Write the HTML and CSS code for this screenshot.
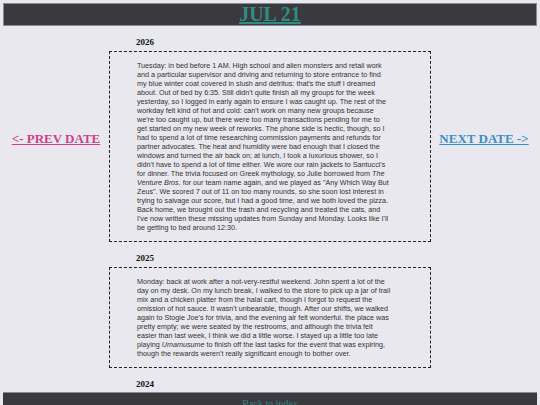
FILE: index.html
```html
<!DOCTYPE html>
<html>
<head>
    <title>Jul 21</title>
    <link rel="stylesheet" href="styles.css">
</head>
<body>
    <div class="topbar">
        <a class="day-title" href="#">JUL 21</a>
    </div>

    <div class="layout">
        <div class="side">
            <a class="prev-link" href="#">&lt;- PREV DATE</a>
        </div>

        <div class="entries">
            <div class="entry">
                <h3 class="year">2026</h3>
                <div class="entry-box">
                    <p>Tuesday: in bed before 1 AM. High school and alien monsters and retail work and a particular supervisor and driving and returning to store entrance to find my blue winter coat covered in slush and detritus: that's the stuff I dreamed about. Out of bed by 6:35. Still didn't quite finish all my groups for the week yesterday, so I logged in early again to ensure I was caught up. The rest of the workday felt kind of hot and cold: can't work on many new groups because we're too caught up, but there were too many transactions pending for me to get started on my new week of reworks. The phone side is hectic, though, so I had to spend a lot of time researching commission payments and refunds for partner advocates. The heat and humidity were bad enough that I closed the windows and turned the air back on; at lunch, I took a luxurious shower, so I didn't have to spend a lot of time either. We wore our rain jackets to Santucci's for dinner. The trivia focused on Greek mythology, so Julie borrowed from <i>The Venture Bros.</i> for our team name again, and we played as "Any Which Way But Zeus". We scored 7 out of 11 on too many rounds, so she soon lost interest in trying to salvage our score, but I had a good time, and we both loved the pizza. Back home, we brought out the trash and recycling and treated the cats, and I've now written these missing updates from Sunday and Monday. Looks like I'll be getting to bed around 12:30.</p>
                </div>
            </div>

            <div class="entry">
                <h3 class="year">2025</h3>
                <div class="entry-box">
                    <p>Monday: back at work after a not-very-restful weekend. John spent a lot of the day on my desk. On my lunch break, I walked to the store to pick up a jar of trail mix and a chicken platter from the halal cart, though I forgot to request the omission of hot sauce. It wasn't unbearable, though. After our shifts, we walked again to Stogie Joe's for trivia, and the evening air felt wonderful. the place was pretty empty; we were seated by the restrooms, and although the trivia felt easier than last week, I think we did a little worse. I stayed up a little too late playing <i>Umamusume</i> to finish off the last tasks for the event that was expiring, though the rewards weren't really significant enough to bother over.</p>
                </div>
            </div>

            <div class="entry">
                <h3 class="year">2024</h3>
                <div class="entry-box">
                    <p></p>
                </div>
            </div>
        </div>

        <div class="side">
            <a class="next-link" href="#">NEXT DATE -&gt;</a>
        </div>
    </div>

    <div class="bottombar">
        <a class="index-link" href="#">Back to index</a>
    </div>
</body>
</html>
```

FILE: styles.css
```css
body {
    margin: 3px;
    background-color: #e8e8ee;
    font-family: "Liberation Serif", "Times New Roman", serif;
}

.topbar {
    background-color: #3a3a3e;
    border: 1px solid #8a8a90;
    height: 21px;
    text-align: center;
}

.day-title {
    font-size: 20px;
    line-height: 21px;
    font-weight: bold;
    color: #2f8c84;
}

.layout {
    display: grid;
    grid-template-columns: 106px 1fr 106px;
}

.side {
    padding-top: 103px;
    text-align: center;
}

.prev-link,
.next-link {
    font-size: 13px;
    line-height: 16px;
    font-weight: bold;
}

.prev-link {
    color: #d0408a;
}

.next-link {
    color: #3a8fd0;
}

.entry {
    margin-top: 11px;
}

.year {
    margin: 0 0 3px 27px;
    font-size: 9px;
    line-height: 11px;
    color: #111;
}

.entry-box {
    border: 1px dashed #222;
    padding: 9px 39px 9px 27px;
    min-height: 20px;
}

.entry-box p {
    margin: 0;
    font-family: "Liberation Sans", Arial, sans-serif;
    font-size: 7.2px;
    line-height: 9px;
    color: #333;
}

.bottombar {
    position: fixed;
    left: 3px;
    right: 3px;
    bottom: 0;
    height: 12px;
    background-color: #3a3a3e;
    border-top: 1px solid #8a8a90;
    text-align: center;
}

.index-link {
    font-size: 10px;
    line-height: 12px;
    color: #2f8c84;
}
```
